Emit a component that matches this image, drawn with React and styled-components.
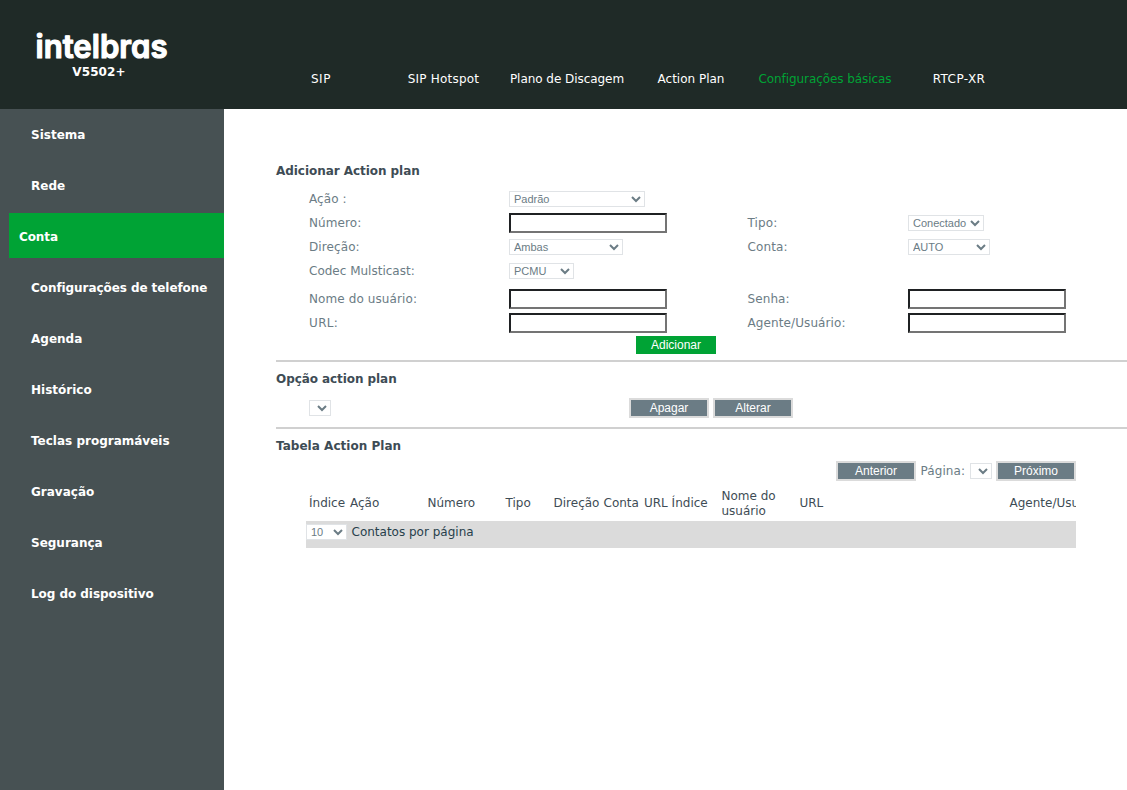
import styled, { createGlobalStyle } from "styled-components";

const COLORS = {
  dark: "#1f2a27",
  side: "#475153",
  green: "#00a335",
  slate: "#6b7c85",
  title: "#3e4c55",
  line: "#d0d0d0",
  grey: "#dbdbdb",
};

const GlobalStyle = createGlobalStyle`
  * {
    box-sizing: border-box;
  }
  body {
    margin: 0;
    background: #fff;
    font-family: Verdana, "DejaVu Sans", sans-serif;
    font-size: 12px;
  }
`;

const Page = styled.div`
  height: 790px;
  display: flex;
  flex-direction: column;
  overflow: hidden;
`;
const Header = styled.header`
  height: 109px;
  flex: none;
  display: flex;
  background: ${COLORS.dark};
`;
const Brand = styled.div`
  width: 260px;
  padding: 20px 0 0 32px;
`;
const Logo = styled.svg`
  display: block;
  width: 140px;
  height: 42px;
  overflow: visible;
`;
const Wordmark = styled.text`
  fill: #fff;
  stroke: #fff;
  stroke-width: 1.2px;
  stroke-linejoin: round;
  font: 600 32px Inter, sans-serif;
  font-feature-settings: "cv11";
`;
const Model = styled.div`
  width: 134px;
  padding-top: 2px;
  text-align: center;
  color: #fff;
  font-weight: bold;
  line-height: 16px;
  letter-spacing: 0.1px;
`;
const Nav = styled.nav`
  display: grid;
  grid-template-columns: 122px 123px 124px 124px 144px 124px;
  padding-top: 69px;
`;
const Text = styled.span`
  letter-spacing: ${(p) => p.$ls || 0}px;
  white-space: nowrap;
`;
const NavItem = styled.a`
  text-align: center;
  line-height: 20px;
  color: ${(p) => (p.$active ? COLORS.green : "#fff")};
`;
const Body = styled.div`
  flex: 1;
  display: flex;
`;
const Sidebar = styled.aside`
  width: 224px;
  flex: none;
  padding: 2px 0 0 9px;
  display: flex;
  flex-direction: column;
  gap: 6px;
  background: ${COLORS.side};
`;
const SideItem = styled.a`
  height: 45px;
  line-height: 48px;
  padding-left: ${(p) => (p.$active ? 10 : 22)}px;
  color: #fff;
  font-weight: bold;
  background: ${(p) => (p.$active ? COLORS.green : "transparent")};
`;
const Content = styled.main`
  flex: 1;
  min-width: 0;
  padding: 52px 0 0 52px;
`;
const Title = styled.h3`
  margin: 0;
  font-size: 12px;
  line-height: 21px;
  color: ${COLORS.title};
`;
const Form = styled.div`
  padding: 5px 0 0 33px;
`;
const Row = styled.div`
  display: grid;
  grid-template-columns: 200px 238.5px 160.5px 160px;
  align-items: center;
  height: 24px;
  margin-top: ${(p) => p.$gap || 0}px;
  color: ${COLORS.slate};
`;
const Select = styled.select`
  display: block;
  width: ${(p) => p.$w}px;
  height: 16px;
  padding: 0;
  border: 1px solid #e0e3e6;
  border-radius: 0;
  background: #fff;
  color: ${COLORS.slate};
  font: 11px "Liberation Sans", Arial, sans-serif;
`;
const Input = styled.input`
  width: 158px;
  height: 20px;
  border: 2px solid;
  border-color: #1f2123 #747474 #747474 #1f2123;
  background: #fff;
`;
const Button = styled.button`
  width: 80px;
  height: 20px;
  padding: 0 0 1px;
  border: 2px solid ${COLORS.grey};
  background: ${COLORS.slate};
  color: #fff;
  font: 12px/14px "Liberation Sans", Arial, sans-serif;
`;
const AddButton = styled(Button)`
  display: block;
  height: 18px;
  margin: 1px 0 0 327px;
  border: 0;
  background: ${COLORS.green};
`;
const Line = styled.hr`
  height: 2px;
  margin: ${(p) => p.$top}px 0 0;
  border: 0;
  background: ${COLORS.line};
`;
const Section = styled.section`
  padding-top: ${(p) => p.$top}px;
`;
const Options = styled.div`
  display: flex;
  align-items: center;
  gap: 4px;
  padding: 8px 0 0 33px;
  & > select {
    margin-right: 294px;
  }
`;
const Pager = styled.div`
  display: flex;
  align-items: center;
  justify-content: space-between;
  width: 240px;
  margin: 4px 0 0 560px;
  color: ${COLORS.slate};
`;
const Table = styled.div`
  width: 770px;
  margin: 3px 0 0 30px;
  overflow: hidden;
`;
const TableHead = styled.div`
  display: grid;
  grid-template-columns: 41px 77.5px 78px 48px 50px 40.5px 77.5px 78px 210px 100px;
  align-items: center;
  height: 37px;
  padding: 2px 0 0 3px;
  line-height: 15px;
  color: ${COLORS.title};
`;
const TableFoot = styled.div`
  display: flex;
  gap: 4.5px;
  height: 27px;
  padding: 3px 0 0;
  line-height: 16px;
  background: ${COLORS.grey};
  color: #27404b;
`;

const navItems = [
  { label: "SIP", ls: 0.6 },
  { label: "SIP Hotspot", ls: 0.2 },
  { label: "Plano de Discagem", ls: -0.05 },
  { label: "Action Plan" },
  { label: "Configurações básicas", active: true, ls: -0.07 },
  { label: "RTCP-XR", ls: 0.4 },
];

const sideItems = [
  { label: "Sistema" },
  { label: "Rede" },
  { label: "Conta", active: true, ls: -0.1 },
  { label: "Configurações de telefone", ls: -0.07 },
  { label: "Agenda" },
  { label: "Histórico" },
  { label: "Teclas programáveis" },
  { label: "Gravação" },
  { label: "Segurança" },
  { label: "Log do dispositivo", ls: -0.05 },
];

const columns = [
  ["Índice"],
  ["Ação"],
  ["Número"],
  ["Tipo"],
  ["Direção"],
  ["Conta"],
  ["URL Índice"],
  ["Nome do", "usuário"],
  ["URL"],
  ["Agente/Usuário"],
];

const Dropdown = ({ value, width }) => (
  <Select $w={width}>{value && <option>{value}</option>}</Select>
);

const App = () => {
  return (
    <Page>
      <GlobalStyle />
      <Header>
        <Brand>
          <Logo viewBox="0 0 140 42">
            <Wordmark
              x="3.5"
              y="37.6"
              textLength="132"
              lengthAdjust="spacingAndGlyphs"
            >
              intelbras
            </Wordmark>
          </Logo>
          <Model>V5502+</Model>
        </Brand>
        <Nav>
          {navItems.map((item) => (
            <NavItem key={item.label} $active={item.active}>
              <Text $ls={item.ls}>{item.label}</Text>
            </NavItem>
          ))}
        </Nav>
      </Header>
      <Body>
        <Sidebar>
          {sideItems.map((item) => (
            <SideItem key={item.label} $active={item.active}>
              <Text $ls={item.ls}>{item.label}</Text>
            </SideItem>
          ))}
        </Sidebar>
        <Content>
          <Title>
            <Text $ls={-0.05}>Adicionar Action plan</Text>
          </Title>
          <Form>
            <Row>
              <Text $ls={0.1}>Ação :</Text>
              <Dropdown value="Padrão" width={136} />
            </Row>
            <Row>
              <Text $ls={0.1}>Número:</Text>
              <Input />
              <Text $ls={0.1}>Tipo:</Text>
              <Dropdown value="Conectado" width={76} />
            </Row>
            <Row>
              <Text $ls={0.1}>Direção:</Text>
              <Dropdown value="Ambas" width={114} />
              <Text $ls={0.1}>Conta:</Text>
              <Dropdown value="AUTO" width={82} />
            </Row>
            <Row>
              <Text>Codec Mulsticast:</Text>
              <Dropdown value="PCMU" width={65} />
            </Row>
            <Row $gap={4}>
              <Text $ls={0.1}>Nome do usuário:</Text>
              <Input />
              <Text $ls={0.1}>Senha:</Text>
              <Input />
            </Row>
            <Row>
              <Text $ls={0.35}>URL:</Text>
              <Input />
              <Text $ls={0.1}>Agente/Usuário:</Text>
              <Input />
            </Row>
            <AddButton>Adicionar</AddButton>
          </Form>
          <Line $top={6} />
          <Section $top={7}>
            <Title>
              <Text $ls={-0.07}>Opção action plan</Text>
            </Title>
            <Options>
              <Dropdown width={22} />
              <Button>Apagar</Button>
              <Button>Alterar</Button>
            </Options>
          </Section>
          <Line $top={9} />
          <Section $top={7}>
            <Title>
              <Text $ls={0.03}>Tabela Action Plan</Text>
            </Title>
            <Pager>
              <Button>Anterior</Button>
              <Text $ls={0.1}>Página:</Text>
              <Dropdown width={22} />
              <Button>Próximo</Button>
            </Pager>
            <Table>
              <TableHead>
                {columns.map((lines) => (
                  <div key={lines.join(" ")}>
                    {lines.map((line) => (
                      <div key={line}>
                        <Text>{line}</Text>
                      </div>
                    ))}
                  </div>
                ))}
              </TableHead>
              <TableFoot>
                <Dropdown value="10" width={41} />
                <Text>Contatos por página</Text>
              </TableFoot>
            </Table>
          </Section>
        </Content>
      </Body>
    </Page>
  );
};

export default App;
